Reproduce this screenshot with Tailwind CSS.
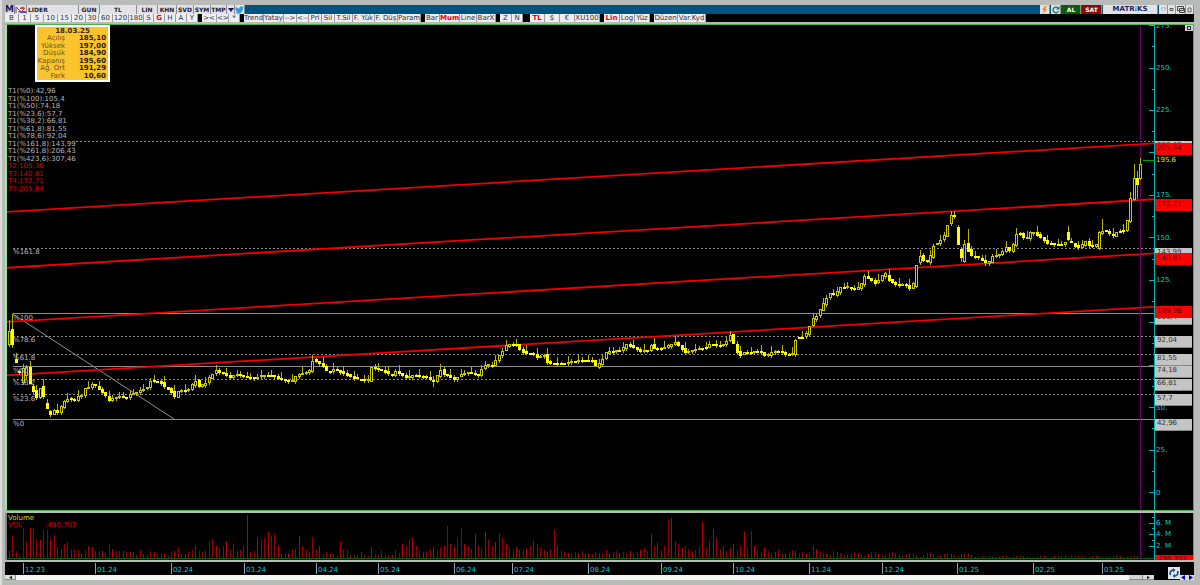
<!DOCTYPE html>
<html lang="tr">
<head>
    <meta charset="UTF-8">
    <meta name="viewport" content="width=device-width, initial-scale=1.0">
    <title>LIDER - Matriks</title>
    <script src="https://cdn.jsdelivr.net/npm/@tailwindcss/browser@4"></script>
</head>
<body class="h-screen flex flex-col overflow-hidden bg-[#b9bbb9] border-l-2 border-[#dcdcdc] pl-[3px] pr-[6px] pt-[5px] pb-[5px] font-['DejaVu_Sans',sans-serif] text-[7px] leading-[8px] text-[#b8b8b8]">

    <!-- Sembol çubuğu -->
    <header class="flex h-[9px] shrink-0 bg-[#00527f] text-[6px] text-[#202030] font-bold [&_button]:bg-[#e2e2e6] [&_button]:border-r [&_button]:border-[#8c8c94] [&_button]:shrink-0 [&_button]:overflow-hidden [&_button]:whitespace-nowrap [&_button]:leading-[9px]">
        <button class="w-[10px] text-[9px] text-[#16165e]">M</button>
        <button class="w-[12px] flex items-center justify-center" aria-label="Grafik">
            <svg width="11" height="9" viewBox="0 0 11 9" fill="none"><path d="M1 2v6M1 2l5 5 4-4" stroke="#b03040"/><path d="M5 4c0-3 5-3 5 0z" fill="#d04848"/><path d="M3 6h8v2H5z" fill="#4a5aa0"/></svg>
        </button>
        <button class="w-[52px] text-left pl-px">LIDER</button>
        <button class="w-[21px]">GUN</button>
        <button class="w-[37px]">TL</button>
        <button class="w-[21px]">LIN</button>
        <button class="w-[19px]">KHN</button>
        <button class="w-[17px]">SVD</button>
        <button class="w-[17px]">SYM</button>
        <button class="w-[16px]">TMP</button>
        <button class="w-[8px] flex items-center justify-center" aria-label="Aç">
            <svg width="6" height="4" viewBox="0 0 6 4"><path d="M0 0h6L3 4z" fill="#16165e"/></svg>
        </button>
        <button class="w-[10px] flex items-center justify-center" aria-label="Twitter">
            <svg width="9" height="8" viewBox="0 0 24 20"><path fill="#2a9fe0" d="M24 2.4a10 10 0 0 1-2.8.8A5 5 0 0 0 23.300.500a10 10 0 0 1-3.100 1.200A5 5 0 0 0 11.800 6.200 14 14 0 0 1 1.700 1 5 5 0 0 0 3.200 7.600 5 5 0 0 1 1 7a5 5 0 0 0 4 4.800 5 5 0 0 1-2.200.1 5 5 0 0 0 4.600 3.400A10 10 0 0 1 0 17.400 14 14 0 0 0 21.500 5z"/></svg>
        </button>
        <div class="ml-auto flex gap-px">
            <button class="w-[10px] flex items-center justify-center" aria-label="Hızlı emir">
                <svg width="7" height="8" viewBox="0 0 7 8"><path d="M4 0 1 4h2L2 8l4-5H4l2-3z" fill="#f08a10"/></svg>
            </button>
            <button class="w-[10px] flex items-center justify-center" aria-label="Yenile">
                <svg width="8" height="8" viewBox="0 0 8 8" fill="none"><path d="M6.500 5A2.800 2.800 0 1 1 6 2" stroke="#14806a" stroke-width="1.400"/><path d="M7.500 0v3.500H4z" fill="#14806a"/></svg>
            </button>
            <button class="w-[19px] !bg-[#0b5c0b] text-white">AL</button>
            <button class="w-[20px] !bg-[#8a0a0a] text-white">SAT</button>
            <button class="w-[55px] text-[7px] text-[#1c1c60]">MATR<span class="text-[#2a8fd0]">i</span>KS</button>
            <div class="flex">
                <button class="w-[9px] flex items-center justify-center" aria-label="Menü"><svg width="7" height="5" viewBox="0 0 7 5"><path d="M1 1h5L3.500 4z" fill="#fff" stroke="#999" stroke-width=".7"/></svg></button>
                <button class="w-[8px] flex items-center justify-center" aria-label="Küçült"><svg width="5" height="5" viewBox="0 0 5 5"><path d="M1 1.500h3v2H1z" fill="none" stroke="#555"/></svg></button>
                <button class="w-[10px] flex items-center justify-center" aria-label="Pencere"><svg width="8" height="7" viewBox="0 0 8 7"><path d="M.5.5h6v4h-6zM2.500 2.500h5v4h-5z" fill="none" stroke="#444"/></svg></button>
                <button class="w-[8px] flex items-center justify-center" aria-label="Kapat"><svg width="5" height="6" viewBox="0 0 5 6"><path d="M1 1h3v4H1z" fill="none" stroke="#666"/></svg></button>
            </div>
        </div>
    </header>

    <!-- Periyot ve araçlar -->
    <nav class="flex gap-[4px] h-[8px] shrink-0 bg-black text-[#30303a] [&>div]:flex [&_button]:bg-[#eeeef0] [&_button]:border-r [&_button]:border-[#9a9aa0] [&_button]:shrink-0 [&_button]:overflow-hidden [&_button]:whitespace-nowrap">
        <div>
            <button class="w-[14px]">B</button>
            <button class="w-[12px]">1</button>
            <button class="w-[13px]">5</button>
            <button class="w-[14px]">10</button>
            <button class="w-[14px]">15</button>
            <button class="w-[14px]">20</button>
            <button class="w-[13px]">30</button>
            <button class="w-[14px]">60</button>
            <button class="w-[16px]">120</button>
            <button class="w-[15px]">180</button>
            <button class="w-[10px]">S</button>
            <button class="w-[11px] font-bold text-red-600">G</button>
            <button class="w-[11px]">H</button>
            <button class="w-[11px]">A</button>
            <button class="w-[11px]">Y</button>
        </div>
        <div>
            <button class="w-[15px]">&gt;&lt;</button>
            <button class="w-[12px]">&lt;&gt;</button>
            <button class="w-[11px]">*</button>
        </div>
        <div>
            <button class="w-[20px]">Trend</button>
            <button class="w-[20px]">Yatay</button>
            <button class="w-[13px]">--&gt;</button>
            <button class="w-[12px]">&lt;--</button>
            <button class="w-[13px]">Prl</button>
            <button class="w-[13px]">Sil</button>
            <button class="w-[18px]">T.Sil</button>
            <button class="w-[22px]">F. Yük</button>
            <button class="w-[23px]">F. Düş</button>
            <button class="w-[23px]">Param</button>
        </div>
        <div>
            <button class="w-[15px]">Bar</button>
            <button class="w-[20px] font-bold text-red-600">Mum</button>
            <button class="w-[17px]">Line</button>
            <button class="w-[19px]">BarX</button>
        </div>
        <div>
            <button class="w-[12px]">Z</button>
            <button class="w-[11px]">N</button>
        </div>
        <div class="pl-[3px]">
            <button class="w-[15px] font-bold text-red-600">TL</button>
            <button class="w-[15px]">$</button>
            <button class="w-[15px]">€</button>
            <button class="w-[25px]">XU100</button>
        </div>
        <div>
            <button class="w-[16px] font-bold text-red-600">Lin</button>
            <button class="w-[15px]">Log</button>
            <button class="w-[15px]">Yüz</button>
        </div>
        <div>
            <button class="w-[24px]">Düzen</button>
            <button class="w-[28px]">Var.Kyd</button>
        </div>
    </nav>

    <main class="flex-1 min-h-0 flex flex-col">
        <!-- Fiyat grafiği -->
        <section class="flex-1 min-h-0 flex mt-[2px] bg-black border border-[#4fae4f] border-l-2 border-l-[#90ee90]">
            <div class="relative flex-1 min-w-0">
                <svg id="price" class="absolute inset-0 w-full h-full" viewBox="7 25 1147 485" preserveAspectRatio="none" fill="none"></svg>
                <div id="fib-labels"></div>

                <table class="absolute left-[28px] top-0 w-[75px] h-[57px] border-2 border-white bg-[#fcc42c] text-[#6a5420] text-right leading-[7px]">
                    <thead>
                        <tr><th colspan="2" class="text-center text-[#3a2a00] pt-px">18.03.25</th></tr>
                    </thead>
                    <tbody class="[&_th]:font-normal [&_th]:w-[29px] [&_td]:font-bold [&_td]:text-[#2a2000] [&_td]:pr-[2px]">
                        <tr><th>Açılış</th><td>185,10</td></tr>
                        <tr><th>Yüksek</th><td>197,00</td></tr>
                        <tr><th>Düşük</th><td>184,90</td></tr>
                        <tr><th>Kapanış</th><td>195,60</td></tr>
                        <tr><th>Ağ. Ort</th><td>191,29</td></tr>
                        <tr><th>Fark</th><td>10,60</td></tr>
                    </tbody>
                </table>

                <ul class="absolute left-px top-[63px] h-[105px] flex flex-col justify-between whitespace-nowrap leading-[7px]">
                    <li>T1(%0):42,96</li>
                    <li>T1(%100):105,4</li>
                    <li>T1(%50):74,18</li>
                    <li>T1(%23,6):57,7</li>
                    <li>T1(%38,2):66,81</li>
                    <li>T1(%61,8):81,55</li>
                    <li>T1(%78,6):92,04</li>
                    <li>T1(%161,8):143,99</li>
                    <li>T1(%261,8):206,43</li>
                    <li>T1(%423,6):307,46</li>
                    <li class="text-[#d80000]">T2:109,36</li>
                    <li class="text-[#d80000]">T3:140,81</li>
                    <li class="text-[#d80000]">T4:172,71</li>
                    <li class="text-[#d80000]">T5:205,64</li>
                </ul>
            </div>
            <div id="price-axis" class="relative w-[39px] shrink-0 overflow-hidden border-l border-[#00b4bc] text-[#00d0d8]">
                <button class="absolute z-10 right-0 top-0 w-[8px] h-[6px] bg-[#d0d0d0] flex items-center justify-center" aria-label="Büyüt">
                    <span class="w-[4px] h-[4px] border border-[#333]"></span>
                </button>
            </div>
        </section>

        <!-- Hacim -->
        <section class="h-[47px] shrink-0 flex mt-[2px] bg-black border-l-2 border-[#888] border-r border-r-[#4fae4f]">
            <div class="relative flex-1 min-w-0">
                <svg id="volume" class="absolute inset-0 w-full h-full" viewBox="7 513 1147 47" preserveAspectRatio="none" fill="none"></svg>
                <div class="absolute left-px top-[2px] leading-[7px]">
                    <p class="text-[#d8d800]">Volume</p>
                    <p class="flex text-[#d80000]"><span class="w-[37px]">VOL</span>:490.701</p>
                </div>
            </div>
            <div id="volume-axis" class="relative w-[39px] shrink-0 overflow-hidden border-l border-[#00b4bc] text-[#00d0d8]">
                <span class="absolute left-0 right-0 bottom-0 h-[5px] bg-[#ff0000] text-[#500000] leading-[8px] pl-[3px] overflow-hidden">490.701</span>
            </div>
        </section>

        <!-- Tarih ekseni -->
        <section class="h-[13px] shrink-0 flex mt-[2px] bg-black pl-[2px]">
            <div id="dates" class="relative flex-1 min-w-0 text-[#00d0d8]"></div>
            <div class="relative w-[40px] shrink-0">
                <button class="absolute z-10 right-[14px] top-[5px] w-[12px] h-[12px] bg-[#e4e6ea] flex items-center justify-center" aria-label="Senkronize">
                    <svg width="10" height="10" viewBox="0 0 10 10" fill="none" stroke="#1c5a9c" stroke-width="1.800"><path d="M1.500 7C.5 4 2 2 4.500 2"/><path d="M8.500 3C9.500 6 8 8 5.500 8"/><path d="M4 0l2.500 2L4 4.500zM6 5.500 3.500 8 6 10z" fill="#1c5a9c" stroke="none"/></svg>
                </button>
            </div>
        </section>
        <div class="h-[5px] shrink-0 flex bg-black">
            <div class="flex-1 flex bg-[#f6f6f6]">
                <button class="w-[11px] bg-[#dcdcdc] border-r border-b border-[#888] flex items-center justify-center" aria-label="Sola kaydır"><svg width="3" height="3" viewBox="0 0 3 3"><path d="M3 0v3L0 1.500z" fill="#111"/></svg></button>
                <button class="ml-auto w-[14px] bg-[#d4d4d4] border-r border-b border-[#888]" aria-label="Kaydırma çubuğu"></button>
                <button class="w-[11px] bg-[#dcdcdc] border-b border-[#888] flex items-center justify-center" aria-label="Sağa kaydır"><svg width="3" height="3" viewBox="0 0 3 3"><path d="M0 0v3l3-1.500z" fill="#111"/></svg></button>
            </div>
            <div class="w-[40px] flex justify-end">
                <button class="w-[7px] bg-[#dcdce8] flex items-center justify-center" aria-label="Önceki"><svg width="5" height="5" viewBox="0 0 5 5"><path d="M4 0v5L0 2.500z" fill="#0000b0"/></svg></button>
                <button class="w-[7px] bg-[#dcdce8] flex items-center justify-center" aria-label="Sonraki"><svg width="5" height="5" viewBox="0 0 5 5"><path d="M1 0v5l4-2.500z" fill="#0000b0"/></svg></button>
            </div>
        </div>
    </main>

    <script>
        const TOP = 25, HEIGHT = 485, LEFT = 7, WIDTH = 1147;
        const priceY = p => 492.5 - p * 1.698;
        const pct = y => (y - TOP) / HEIGHT * 100 + '%';
        const barX = i => Math.floor(9.3 + i * 3.45) + 0.5;

        // Fibonacci seviyeleri
        const fib = [
            ['%0', 42.96, true], ['%23.6', 57.7], ['%38.2', 66.81], ['%50', 74.18, true],
            ['%61.8', 81.55], ['%78.6', 92.04], ['%100', 105.4, true], ['%161.8', 143.99], ['', 206.43]
        ];
        const trends = [109.36, 140.81, 172.71, 205.64];

        let svg = '';
        fib.forEach(([name, price, solid]) => {
            const y = Math.floor(priceY(price)) + 0.5;
            svg += `<path d="M${name ? 13 : 76} ${y}H1154" stroke="#8c8c8c" ${solid ? '' : 'stroke-dasharray="2 2"'} shape-rendering="crispEdges"/>`;
        });
        svg += '<path d="M13 314L174 419" stroke="#909090"/>';
        trends.forEach(p => {
            const y = priceY(p);
            svg += `<path d="M7 ${y + 68.5}L1154 ${y}" stroke="#f00000" stroke-width="1.800"/>`;
        });
        svg += '<path d="M1140.500 25V510" stroke="#6c006c" shape-rendering="crispEdges"/>';

        // Kapanış noktaları: [x, y]
        const closes = [
            [9,329],[13,346],[16,360],[20,372],[23,368],[27,367],[30,382],[34,392],[37,397],[40,387],[44,397],[47,407],[51,415],[54,411],[58,413],[61,408],[64,402],[68,399],
            [75,400],[78,396],[82,394],[85,387],[89,386],[92,383],[95,384],[99,388],[102,391],[106,396],[109,400],[120,397],[126,399],[130,395],[137,392],[144,388],[148,386],[151,379],[161,381],[165,386],[168,388],[172,392],[175,397],[178,392],[189,390],[192,386],[196,381],[199,387],[206,382],[210,376],[216,369],[223,372],[230,376],
            [237,374],[244,377],[254,379],[262,376],[273,375],[284,379],[292,380],[297,374],[309,372],[313,360],[318,363],[325,368],[328,373],[334,369],[344,372],[353,376],[368,381],[371,367],[384,372],[392,376],[396,371],[407,377],[414,373],[426,376],[434,381],[441,370],[444,375],[455,380],[460,375],[469,371],[479,374],[483,365],[487,363],[492,365],[498,357],[505,348],[507,345],[516,345],[518,349],[525,353],[534,353],[538,357],[544,353],[548,362],
            [564,363],[580,361],[594,360],[596,367],[600,362],[607,350],[621,349],[627,344],[641,352],[648,351],[651,345],[655,349],[664,347],[675,341],[680,345],[685,351],[698,349],[707,348],[710,345],[721,346],[726,342],[730,333],[734,343],[739,355],[744,351],[760,351],[766,357],[773,352],[780,352],[785,354],[792,354],[794,349],[796,336],[802,336],[806,333],[809,326],[813,318],[816,316],[820,310],[823,304],[827,298],[831,293],[835,297],[838,291],[841,288],[847,287],[851,288],[857,289],[862,282],[864,275],[872,279],[876,282],[880,278],[885,272],[887,277],[890,281],[897,286],[905,285],[909,289],[913,287],[916,267],[919,254],[923,259],[927,261],[930,256],[934,243],[938,242],[942,237],[945,234],[948,223],[951,215],[954,213],
            [958,241],[961,260],[964,243],[968,250],[972,257],[977,257],[982,260],[986,263],[989,262],[992,255],[998,254],[1003,250],[1007,245],[1010,250],[1013,245],[1017,233],[1020,233],[1023,238],[1027,239],[1031,232],[1035,234],[1040,237],[1044,240],[1047,243],[1054,243],[1063,243],[1069,239],[1073,243],[1078,247],[1082,245],[1086,241],[1089,246],[1096,248],[1099,232],[1102,231],[1108,232],[1112,237],[1115,233],[1119,229],[1123,232],[1126,223],[1128,217],[1131,194],[1134,176],[1137,187],[1141,161]
        ];
        const closeAt = x => {
            let k = closes.findIndex(c => c[0] >= x);
            if (k < 0) k = closes.length - 1;
            if (k === 0) return closes[0][1];
            const [x0, y0] = closes[k - 1], [x1, y1] = closes[k];
            return y0 + (y1 - y0) * Math.min(1, (x - x0) / (x1 - x0));
        };
        // Açılışı önceki kapanıştan kopuk ya da fitili uzun olan günler
        const special = {
            0: [344, 320, 346], 1: [329, 314, 347], 2: [359, 353, 361], 3: [371, 369, 374], 4: [382, 364, 384], 5: [375, 365, 378],
            6: [367, 361, 383], 7: [386, 384, 393], 10: [386, 379, 398], 11: [403, 399, 407], 12: [411, 410, 416], 123: [380, 376, 386],
            275: [227, 225, 242], 276: [249, 247, 261], 277: [261, 240, 262], 278: [243, 229, 251],
            307: [232, 226, 240], 316: [248, 231, 249], 317: [233, 219, 234],
            325: [221, 192, 222], 326: [199, 164, 200], 327: [178, 171, 198], 328: [178, 158, 179]
        };
        for (let i = 0; i < 329; i++) {
            const x = barX(i), wobble = Math.sin(i * 12.9) * 1.1;
            const close = Math.round(special[i] ? closeAt(x) : closeAt(x) + wobble);
            let open = Math.round(closeAt(x - 3.45) + Math.sin((i - 1) * 12.9) * 1.1);
            let high = Math.min(open, close) - Math.round(Math.abs(Math.sin(i * 7.3)) ** 3 * 6);
            let low = Math.max(open, close) + Math.round(Math.abs(Math.sin(i * 4.1)) * 2);
            if (special[i]) [open, high, low] = special[i];
            const top = Math.min(open, close), size = Math.max(1, Math.abs(open - close));
            const falling = close >= open;
            svg += `<path d="M${x} ${high}V${low + 1}" stroke="#b4b400" shape-rendering="crispEdges"/>`;
            svg += `<rect x="${x - 1}" y="${top + 0.5}" width="2" height="${size}" stroke="${falling ? '#ffff00' : '#c8c800'}" fill="${falling ? '#ffff00' : '#000'}" shape-rendering="crispEdges"/>`;
        }
        svg += '<path d="M984 263.500h5M988 262.500h2" stroke="#00c000"/><path d="M1143 160.500h11" stroke="#00a000"/>';
        for (let p = 0; p <= 275; p += 12.5) {
            const y = Math.floor(priceY(p)) + 0.5;
            svg += `<path d="M${p % 25 ? 1152 : 1149} ${y}H1154" stroke="#00b4bc"/>`;
        }
        document.getElementById('price').innerHTML = svg;

        document.getElementById('fib-labels').innerHTML = fib.map(([name, price]) =>
            `<span class="absolute left-[6px]" style="top:${pct(priceY(price))}">${name}</span>`).join('');

        // Fiyat ekseni
        let axis = '';
        for (let p = 0; p <= 275; p += 25) {
            axis += `<span class="absolute left-px -translate-y-1/2" style="top:${pct(priceY(p))}">${p ? p + '.' : p}</span>`;
        }
        fib.slice().reverse().forEach(([, p]) => {
            axis += `<span class="absolute left-0 right-px h-[12px] pl-[2px] bg-[#c4c4c4] border-b border-[#888] text-[#303030] leading-[9px]" style="top:${pct(Math.floor(priceY(p)))}">${String(p).replace('.', ',')}</span>`;
        });
        trends.forEach(p => {
            axis += `<span class="absolute left-0 right-px h-[12px] pl-[2px] bg-[#ff0000] text-[#500000] leading-[10px]" style="top:${pct(Math.floor(priceY(p)))}">${String(p).replace('.', ',')}</span>`;
        });
        axis += `<span class="absolute left-px -translate-y-1/2 text-[#e0e000]" style="top:${pct(priceY(195.6))}">195.6</span>`;
        document.getElementById('price-axis').insertAdjacentHTML('beforeend', axis);

        // Hacim çubukları (piksel yüksekliği)
        const volumes = [
            7,22,7,2,30,16,30,30,19,18,28,28,18,23,11,9,14,16,8,8,8,5,8,12,11,7,7,7,6,14,9,7,7,7,6,6,6,3,8,4,3,7,6,4,5,4,3,6,7,11,5,4,7,8,12,7,6,7,17,19,12,10,12,17,8,14,7,8,12,43,
            6,7,21,19,20,26,22,25,12,4,5,5,8,9,22,12,8,6,21,8,12,4,6,4,4,2,16,8,8,3,3,3,6,3,2,11,4,3,7,3,3,3,8,5,14,12,18,20,12,8,6,7,9,11,8,10,12,32,14,11,
            20,30,14,12,9,24,13,10,26,18,12,16,25,21,14,10,9,11,8,7,9,12,18,14,10,8,6,9,28,12,7,6,5,4,6,5,7,4,5,4,6,5,4,8,5,6,7,5,6,4,7,5,6,8,10,7,24,12,16,8,
            12,38,40,17,14,10,12,9,7,8,11,36,10,18,29,21,9,12,7,11,14,8,12,26,10,27,12,8,6,10,7,5,6,9,4,5,6,8,7,5,6,4,6,12,9,6,5,4,3,7
        ];
        let vol = '';
        for (let i = 0; i < 329; i++) {
            const fade = i < 260 ? 5 : i < 280 ? 4 : 1;
            const h = volumes[i] ?? 1 + Math.round(Math.abs(Math.sin(i * 5.7)) * fade);
            vol += `<path d="M${barX(i)} 558V${558 - h}" stroke="${i % 3 ? '#980000' : '#b80000'}" shape-rendering="crispEdges"/>`;
        }
        vol += '<path d="M7 558.500H1154" stroke="#006400"/><path d="M1140.500 513V560" stroke="#6c006c" shape-rendering="crispEdges"/>';
        [523, 534, 546].forEach(y => vol += `<path d="M1149 ${y + 0.5}H1154M1152 ${y - 5.5}H1154" stroke="#00b4bc"/>`);
        document.getElementById('volume').innerHTML = vol;
        document.getElementById('volume-axis').insertAdjacentHTML('beforeend', [[6, 523], [4, 534], [2, 546]].map(([n, y]) =>
            `<span class="absolute left-px -translate-y-1/2" style="top:${(y - 513) / 47 * 100}%">${n}. M</span>`).join(''));

        // Aylar
        const months = [['12.23', 23], ['01.24', 95], ['02.24', 171], ['03.24', 244], ['04.24', 316], ['05.24', 378], ['06.24', 454], ['07.24', 512],
            ['08.24', 588], ['09.24', 661], ['10.24', 733], ['11.24', 809], ['12.24', 882], ['01.25', 957], ['02.25', 1033], ['03.25', 1102]];
        document.getElementById('dates').innerHTML = months.map(([name, x]) =>
            `<span class="absolute top-px h-[11px] border-l border-[#a0a0a0] pl-px pt-[3px]" style="left:${(x - LEFT) / WIDTH * 100}%">${name}</span>`).join('');
    </script>
</body>
</html>
